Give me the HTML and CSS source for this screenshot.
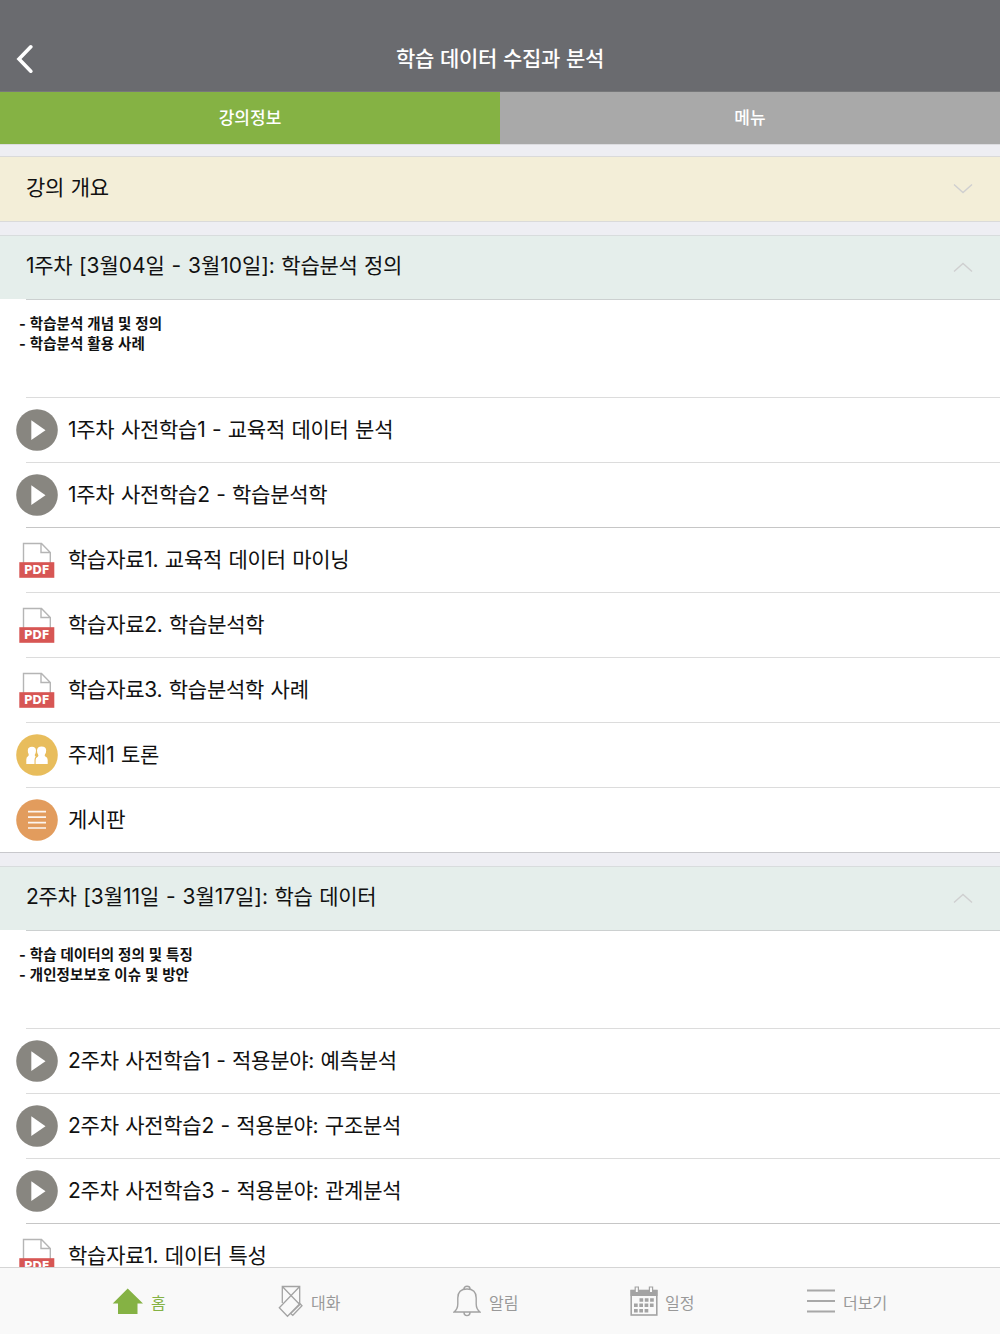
FILE: index.html
```
<!DOCTYPE html>
<html lang="ko">
<head>
    <meta charset="UTF-8">
    <meta name="viewport" content="width=device-width, initial-scale=1.0">
    <title>학습 데이터 수집과 분석</title>
    <link rel="stylesheet" href="styles.css">
</head>
<body>
    <!-- shared icons -->
    <svg class="sprite">
        <symbol id="icon-play" viewBox="0 0 42 42">
            <circle cx="21" cy="21" r="20.8" fill="#888680"/>
            <path d="M15.3 11.2L29.5 21.2L15.3 31Z" fill="#fff"/>
        </symbol>
        <symbol id="icon-pdf" viewBox="0 0 42 42">
            <path d="M7.5 24V4.5H25.5L34.3 13.5V24M25 4.5V13.5H34.3" fill="#fff" stroke="#b5b5b5" stroke-width="1.4"/>
            <rect x="3.3" y="23.2" width="35" height="15.6" fill="#d75654"/>
            <text class="pdf-label" x="8" y="35.4" textLength="25.5" lengthAdjust="spacing">PDF</text>
        </symbol>
        <symbol id="icon-forum" viewBox="0 0 42 42">
            <circle cx="21" cy="21" r="20.8" fill="#e8bd5c"/>
            <path d="M10.3 30V25.5Q10.3 23 12 22.3Q13.3 21.3 12.6 20Q11.8 18.5 11.8 16.5Q11.8 12.8 16 12.8Q19.8 12.8 20 16.5Q20 19.3 18.8 20.7Q18.5 22 19.7 22.5Q18.5 24 18.5 26V30Z" fill="#fff"/>
            <path d="M19.6 30V26Q19.6 23.5 21.8 22.7Q23 22 22 20.3Q21 18.5 21 16.4Q21.2 12.4 25.5 12.4Q30.2 12.4 30.2 16.5Q30.2 18.8 29 20.3Q28.2 22 29.4 22.6Q31.7 23.5 31.7 26V30Z" fill="#fff"/>
        </symbol>
        <symbol id="icon-board" viewBox="0 0 42 42">
            <circle cx="21" cy="21" r="20.8" fill="#e29c5d"/>
            <path d="M12 12.7H30M12 18.2H30M12 23.7H30M12 29H30" stroke="#fff" stroke-width="1.7" opacity=".9"/>
        </symbol>
    </svg>

    <div class="app">
        <header class="header">
            <svg class="back" width="18" height="30" viewBox="0 0 18 30"><path d="M15.8 2.8L4 15L15.8 27.2" fill="none" stroke="#fff" stroke-width="3.6" stroke-linecap="round"/></svg>
            <h1>학습 데이터 수집과 분석</h1>
        </header>

        <nav class="tabs">
            <div class="tab active">강의정보</div>
            <div class="tab">메뉴</div>
        </nav>

        <main class="content">
            <section class="overview">
                <h2>강의 개요</h2>
                <svg class="chevron" width="20" height="12" viewBox="0 0 20 12"><path d="M1 1.5L10 9.5L19 1.5"/></svg>
            </section>

            <section class="week">
                <div class="week-title">
                    <h2>1주차 <span class="dates">[3월04일 - 3월10일]:</span> 학습분석 정의</h2>
                    <svg class="chevron" width="20" height="12" viewBox="0 0 20 12"><path d="M1 9.5L10 1.5L19 9.5"/></svg>
                </div>
                <div class="summary">
                    <p>- 학습분석 개념 및 정의</p>
                    <p>- 학습분석 활용 사례</p>
                </div>
                <ul class="items">
                    <li><svg class="icon"><use href="#icon-play"/></svg><span>1주차 사전학습1 - 교육적 데이터 분석</span></li>
                    <li class="last-video"><svg class="icon"><use href="#icon-play"/></svg><span>1주차 사전학습2 - 학습분석학</span></li>
                    <li><svg class="icon"><use href="#icon-pdf"/></svg><span>학습자료1. 교육적 데이터 마이닝</span></li>
                    <li><svg class="icon"><use href="#icon-pdf"/></svg><span>학습자료2. 학습분석학</span></li>
                    <li><svg class="icon"><use href="#icon-pdf"/></svg><span>학습자료3. 학습분석학 사례</span></li>
                    <li><svg class="icon"><use href="#icon-forum"/></svg><span>주제1 토론</span></li>
                    <li><svg class="icon"><use href="#icon-board"/></svg><span>게시판</span></li>
                </ul>
            </section>

            <section class="week">
                <div class="week-title">
                    <h2>2주차 <span class="dates">[3월11일 - 3월17일]:</span> 학습 데이터</h2>
                    <svg class="chevron" width="20" height="12" viewBox="0 0 20 12"><path d="M1 9.5L10 1.5L19 9.5"/></svg>
                </div>
                <div class="summary">
                    <p>- 학습 데이터의 정의 및 특징</p>
                    <p>- 개인정보보호 이슈 및 방안</p>
                </div>
                <ul class="items">
                    <li><svg class="icon"><use href="#icon-play"/></svg><span>2주차 사전학습1 - 적용분야: 예측분석</span></li>
                    <li><svg class="icon"><use href="#icon-play"/></svg><span>2주차 사전학습2 - 적용분야: 구조분석</span></li>
                    <li class="last-video"><svg class="icon"><use href="#icon-play"/></svg><span>2주차 사전학습3 - 적용분야: 관계분석</span></li>
                    <li><svg class="icon"><use href="#icon-pdf"/></svg><span>학습자료1. 데이터 특성</span></li>
                </ul>
            </section>
        </main>

        <footer class="tabbar">
            <a class="home">
                <svg width="32" height="34" viewBox="0 0 32 34"><path d="M15.7 4.5L31 19.5H25.5V30H6V19.5H.7Z" fill="#85b244"/></svg>
                <span>홈</span>
            </a>
            <a class="chat">
                <svg width="26" height="34" viewBox="0 0 26 34" fill="none" stroke="#a3a3a3" stroke-width="1.3">
                    <path d="M4.3 19V2.5H21.7V19M4.3 2.5L21.7 20.5M21.7 2.5L1.3 23.8L9.5 32.2L22 19.5M20.8 18.2L24 21.8L14.8 31.3L12.3 29.2M22.2 20.2L12.7 29.5"/>
                </svg>
                <span>대화</span>
            </a>
            <a class="alarm">
                <svg width="28" height="34" viewBox="0 0 28 34" fill="none" stroke="#a3a3a3" stroke-width="1.4">
                    <path d="M11 4.8Q11 2.3 14 2.3Q17 2.3 17 4.8M1 28Q4.8 25 4.8 20V14Q4.8 5 14 5Q23.2 5 23.2 14V20Q23.2 25 27 28ZM11 28.5Q11 31.6 14 31.6Q17 31.6 17 28.5"/>
                </svg>
                <span>알림</span>
            </a>
            <a class="calendar">
                <svg width="28" height="34" viewBox="0 0 28 34">
                    <rect x="1.2" y="6.5" width="25.6" height="24.5" fill="none" stroke="#a3a3a3" stroke-width="1.6"/>
                    <path d="M.5 6H27.5V12H.5Z" fill="#a3a3a3"/>
                    <path d="M5.2 3H8.4V8.5H5.2ZM19.4 3H22.6V8.5H19.4Z" fill="#f9f9f9" stroke="#a3a3a3" stroke-width="1.2"/>
                    <path d="M9.5 16H24M4 21.3H24M4 26.7H19" stroke="#a3a3a3" stroke-width="3.4" stroke-dasharray="3.7 1.6"/>
                </svg>
                <span>일정</span>
            </a>
            <a class="more">
                <svg width="30" height="34" viewBox="0 0 30 34"><path d="M1 6.5H29M1 17H29M1 27.5H29" stroke="#a8a8a8" stroke-width="1.8"/></svg>
                <span>더보기</span>
            </a>
        </footer>
    </div>
</body>
</html>
```
FILE: styles.css
```
* {
    box-sizing: border-box;
}
body {
    font-family: Inter, "Noto Sans CJK KR", sans-serif;
    margin: 0;
    color: #111;
}
h1, h2, p, ul {
    margin: 0;
    padding: 0;
    font-weight: normal;
}
.sprite {
    display: none;
}
.app {
    display: flex;
    flex-direction: column;
    height: 1334px;
    overflow: hidden;
    background: #eeeef3;
}
.header {
    display: grid;
    grid-template-columns: 60px 1fr 60px;
    align-items: center;
    flex: none;
    height: 92px;
    padding-top: 26px;
    border-bottom: 1px solid #77787a;
    background: #6a6b6f;
    color: #fff;
}
.header h1 {
    font-size: 21px;
    font-weight: 500;
    line-height: 30px;
    letter-spacing: -0.3px;
    word-spacing: 0.6px;
    text-align: center;
}
.back {
    margin-left: 15px;
}
.tabs {
    display: flex;
    flex: none;
    height: 52px;
}
.tab {
    flex: 1;
    background: #a9a9a9;
    color: #fff;
    font-size: 17px;
    font-weight: 500;
    line-height: 53px;
    text-align: center;
}
.tab.active {
    background: #85b244;
}
.content {
    flex: 1;
    min-height: 0;
    overflow: hidden;
    border-top: 1px solid #dcdce0;
    padding-top: 11px;
}
.overview,
.week-title {
    display: flex;
    justify-content: space-between;
    padding: 0 27px 0 26px;
}
.overview {
    height: 66px;
    border-top: 1px solid #dadada;
    border-bottom: 1px solid #dadada;
    background: #f3eed8;
}
.overview h2,
.week-title h2 {
    font-size: 21px;
    line-height: 60px;
    letter-spacing: -0.3px;
    word-spacing: 1px;
}
.overview h2 {
    line-height: 61px;
}
.dates {
    letter-spacing: -0.05px;
}
.chevron {
    margin-top: 26px;
    fill: none;
    stroke: #cfcfd0;
    stroke-width: 1.4;
}
.week {
    margin-top: 13px;
    border-top: 1px solid #d8dcdd;
    border-bottom: 1px solid #c8c8cc;
    background: #fff;
}
.week-title {
    height: 63px;
    background: #e5eeeb;
}
.summary {
    height: 99px;
    margin-left: 26px;
    border-top: 1px solid #ccd0d0;
    border-bottom: 1px solid #dcdcdc;
    padding-top: 14px;
}
.summary p {
    margin-left: -7px;
    font-size: 14.5px;
    font-weight: 700;
    line-height: 20px;
    letter-spacing: 0.1px;
    word-spacing: 0.3px;
}
.items {
    list-style: none;
}
.items li {
    display: flex;
    align-items: center;
    height: 65px;
    margin-left: 26px;
    border-bottom: 1px solid #dcdcdc;
    font-size: 21px;
    line-height: 30px;
    letter-spacing: -0.25px;
    word-spacing: 0.8px;
}
.items .last-video {
    border-color: #c6c6c6;
}
.items li:last-child {
    height: 64px;
    border-bottom: 0;
}
.icon {
    width: 42px;
    height: 42px;
    margin: 0 10px 0 -10px;
}
.pdf-label {
    fill: #fff;
    font-family: "DejaVu Sans", sans-serif;
    font-size: 11.5px;
    font-weight: bold;
    letter-spacing: 0;
}
.tabbar {
    display: flex;
    flex: none;
    height: 67px;
    border-top: 1px solid #d5d5d5;
    padding-left: 112px;
    background: #f9f9f9;
    color: #999;
    font-size: 16px;
}
.tabbar a {
    display: flex;
    align-items: center;
    flex: none;
    width: 177px;
    gap: 7px;
}
.tabbar span {
    padding-top: 1px;
}
.tabbar .home {
    width: 166px;
    color: #85b244;
}
.tabbar .chat {
    width: 175px;
}
.tabbar .alarm {
    gap: 8px;
}
.tabbar .calendar {
    width: 176px;
}
.tabbar .more {
    width: 120px;
}
```
